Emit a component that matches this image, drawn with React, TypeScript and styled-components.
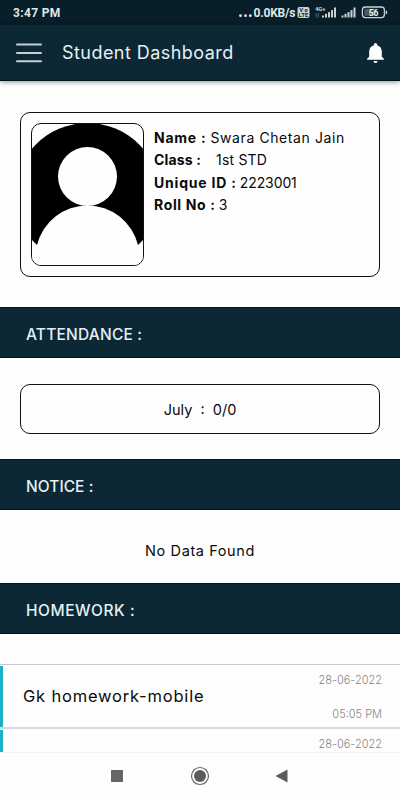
import React from 'react';
import styled, { createGlobalStyle } from 'styled-components';

const Global = createGlobalStyle`
  *, *::before, *::after { box-sizing: border-box; }
  body { margin: 0; background: #fefefe; overflow: hidden; }
`;

const Screen = styled.div`
  width: 400px;
  height: 800px;
  display: flex;
  flex-direction: column;
  overflow: hidden;
  background: #fefefe;
  color: #0a0a0a;
  font-family: Inter, 'Open Sans', sans-serif;
`;

const StatusBar = styled.div`
  flex: none;
  height: 25px;
  padding: 0 12px 0 13px;
  display: flex;
  align-items: center;
  justify-content: space-between;
  background: #081e28;
  color: #dfe7ea;
  font: 700 12px/25px Roboto, sans-serif;
`;

const Clock = styled.span`
  padding-top: 1px;
  letter-spacing: 0.35px;
`;

const StatusIcons = styled.svg`
  display: block;
  width: 150px;
  height: 25px;
`;

const Header = styled.header`
  flex: none;
  height: 56px;
  padding: 0 16px;
  display: flex;
  align-items: center;
  background: #0c2835;
  border-bottom: 1px solid #02141d;
  box-shadow: 0 1px 5px rgba(0, 0, 0, 0.45);
`;

const MenuIcon = styled.svg`
  width: 26px;
  height: 22px;
  margin-right: 20px;
`;

const Title = styled.h1`
  flex: 1;
  margin: 0;
  color: #e6f0f4;
  font-size: 18px;
  font-weight: 400;
  letter-spacing: 0.45px;
  line-height: 24px;
`;

const BellIcon = styled.svg`
  width: 17px;
  height: 20px;
`;

const Content = styled.main`
  flex: 1;
  min-height: 0;
  overflow: hidden;
  display: flex;
  flex-direction: column;
`;

const ProfileCard = styled.section`
  flex: none;
  height: 165px;
  margin: 31px 20px 30px;
  padding: 10px;
  display: flex;
  gap: 10px;
  border: 1px solid #111;
  border-radius: 10px;
`;

const Photo = styled.div`
  width: 113px;
  height: 143px;
  border: 1px solid #111;
  border-radius: 10px;
  overflow: hidden;

  svg { display: block; }
`;

const Details = styled.dl`
  margin: 3px 0 0;
`;

const Detail = styled.div<{ $gap?: number }>`
  display: flex;
  align-items: center;
  gap: ${({ $gap }) => $gap ?? 4}px;
  height: 22.5px;
  font-size: 14px;
  white-space: nowrap;
`;

const Label = styled.dt<{ $track?: number }>`
  font-weight: 700;
  letter-spacing: ${({ $track }) => $track ?? 0}px;
`;

const Value = styled.dd<{ $track?: number }>`
  margin: 0;
  font-weight: 400;
  letter-spacing: ${({ $track }) => $track ?? 0}px;
`;

const Band = styled.h2<{ $track?: number }>`
  flex: none;
  height: 51px;
  margin: 0;
  padding: 2px 26px 0;
  background: #0c2835;
  border-top: 1px solid #03141e;
  border-bottom: 1px solid #03141e;
  color: #e6f0f4;
  font-size: 15.5px;
  font-weight: 450;
  line-height: 49px;
  letter-spacing: ${({ $track }) => $track ?? 0}px;
`;

const MonthCard = styled.div`
  flex: none;
  height: 50px;
  margin: 26px 20px 25px;
  display: flex;
  align-items: center;
  justify-content: center;
  border: 1px solid #111;
  border-radius: 10px;
  font-size: 14.5px;
  white-space: pre;
`;

const Empty = styled.p`
  flex: none;
  height: 73px;
  margin: 0;
  padding-top: 7px;
  display: flex;
  align-items: center;
  justify-content: center;
  font-size: 14.5px;
  letter-spacing: 0.6px;
`;

const HomeworkList = styled.div`
  flex: none;
  margin-top: 30px;
  border-top: 1px solid #c9c9c9;
`;

const HomeworkRow = styled.article`
  height: 64px;
  display: flex;
  border-bottom: 2px solid #d8d8d8;
`;

const Accent = styled.span`
  width: 3px;
  margin-top: 1px;
  background: #1bb3c4;
`;

const RowBody = styled.div`
  flex: 1;
  padding: 8px 18px 5px 20px;
  display: flex;
  justify-content: space-between;
`;

const HomeworkTitle = styled.h3`
  margin: 0 0 4px;
  align-self: center;
  font-size: 16.5px;
  font-weight: 400;
  letter-spacing: 0.8px;
`;

const Stamp = styled.div`
  display: flex;
  flex-direction: column;
  justify-content: space-between;
  align-items: flex-end;
  color: #858585;
  font-size: 11px;
  font-weight: 300;
  line-height: 15px;
`;

const NavBar = styled.nav`
  flex: none;
  height: 48px;
  background: #fefefe;
  border-top: 1px solid #f4f4f4;
`;

const homework = [
  { title: 'Gk homework-mobile', date: '28-06-2022', time: '05:05 PM' },
  { title: '', date: '28-06-2022', time: '' },
];

function Signal({ x }: { x: number }) {
  return (
    <g fill="#c9d3d7">
      {[2, 3.7, 5.4, 7.4, 10].map((h, i) => (
        <rect key={i} x={x + i * 3} y={17.5 - h} width="2" height={h} />
      ))}
    </g>
  );
}

function StatusGlyphs() {
  return (
    <StatusIcons viewBox="238 0 150 25">
      <g fill="#dfe7ea">
        <circle cx="240.5" cy="15.7" r="1.4" />
        <circle cx="245.5" cy="15.7" r="1.4" />
        <circle cx="250.3" cy="15.7" r="1.4" />
        <text x="253.5" y="17" fontSize="12" textLength="42">0.0KB/s</text>
      </g>
      <rect x="297.5" y="7" width="12" height="11" rx="2" fill="#c9d3d7" />
      <g fill="#081e28" fontSize="5.5">
        <text x="299.5" y="12.3" textLength="8">Vo</text>
        <text x="298.7" y="17.2" textLength="9.5">LTE</text>
      </g>
      <text x="315" y="10.5" fontSize="6" fill="#c9d3d7" textLength="10.5">4G+</text>
      <path d="M316.2 13v4.5M318.4 13v4.5" stroke="#53646c" strokeWidth="1" />
      <Signal x={322} />
      <Signal x={341.5} />
      <rect x="362.4" y="7" width="22" height="10.6" rx="3" fill="none" stroke="#c9d3d7" strokeWidth="1.3" />
      <rect x="364.3" y="8.8" width="11" height="7" rx="1" fill="#4c5b62" />
      <rect x="385.7" y="10.5" width="1.4" height="3.5" rx=".6" fill="#c9d3d7" />
      <text x="368.7" y="15.6" fontSize="8.5" fill="#f0f4f5">56</text>
    </StatusIcons>
  );
}

export default function App() {
  return (
    <Screen>
      <Global />
      <StatusBar>
        <Clock>3:47 PM</Clock>
        <StatusGlyphs />
      </StatusBar>
      <Header>
        <MenuIcon viewBox="0 0 26 22">
          <path d="M1 2.5h24M1 11h24M1 19.3h24" stroke="#c5d0d5" strokeWidth="2" strokeLinecap="round" />
        </MenuIcon>
        <Title>Student Dashboard</Title>
        <BellIcon viewBox="0 0 17 20" fill="#fff">
          <path d="M6.9 2.2V1.6a1.6 1.6 0 0 1 3.2 0v.6c3.1.8 4.7 3.3 4.7 6.3v5.2l2.1 2.1v1H.1v-1l2.1-2.1V8.5c0-3 1.6-5.5 4.7-6.3zM6.5 17.9h4a2 2 0 0 1-4 0z" />
        </BellIcon>
      </Header>
      <Content>
        <ProfileCard>
          <Photo>
            <svg width="111" height="141" viewBox="0 0 111 141">
              <circle cx="55.5" cy="72" r="73" fill="#000" />
              <path d="M0 116L5 121A52 52 0 0 1 106 121L111 116V141H0z" fill="#fefefe" />
              <circle cx="55.5" cy="52.5" r="29.5" fill="#fefefe" />
            </svg>
          </Photo>
          <Details>
            <Detail><Label $track={0.75}>Name :</Label><Value $track={0.6}>Swara Chetan Jain</Value></Detail>
            <Detail $gap={15}><Label $track={0.15}>Class :</Label><Value $track={0.2}>1st STD</Value></Detail>
            <Detail $gap={3}><Label $track={0.8}>Unique ID :</Label><Value $track={-0.1}>2223001</Value></Detail>
            <Detail $gap={3}><Label $track={0.65}>Roll No :</Label><Value>3</Value></Detail>
          </Details>
        </ProfileCard>
        <Band $track={0.2}>ATTENDANCE :</Band>
        <MonthCard>{'July  :  0/0'}</MonthCard>
        <Band $track={0.05}>NOTICE :</Band>
        <Empty>No Data Found</Empty>
        <Band $track={0.55}>HOMEWORK :</Band>
        <HomeworkList>
          {homework.map((item, i) => (
            <HomeworkRow key={i}>
              <Accent />
              <RowBody>
                <HomeworkTitle>{item.title}</HomeworkTitle>
                <Stamp>
                  <time>{item.date}</time>
                  <time>{item.time}</time>
                </Stamp>
              </RowBody>
            </HomeworkRow>
          ))}
        </HomeworkList>
      </Content>
      <NavBar>
        <svg width="400" height="47" viewBox="0 753 400 47">
          <rect x="111" y="770" width="12" height="12" fill="#666" />
          <circle cx="200" cy="776" r="8.5" fill="none" stroke="#666" strokeWidth="1.2" />
          <circle cx="200" cy="776" r="6" fill="#5c5c5c" />
          <path d="M275.5 776L287.5 769.5V782.5z" fill="#5c5c5c" />
        </svg>
      </NavBar>
    </Screen>
  );
}
